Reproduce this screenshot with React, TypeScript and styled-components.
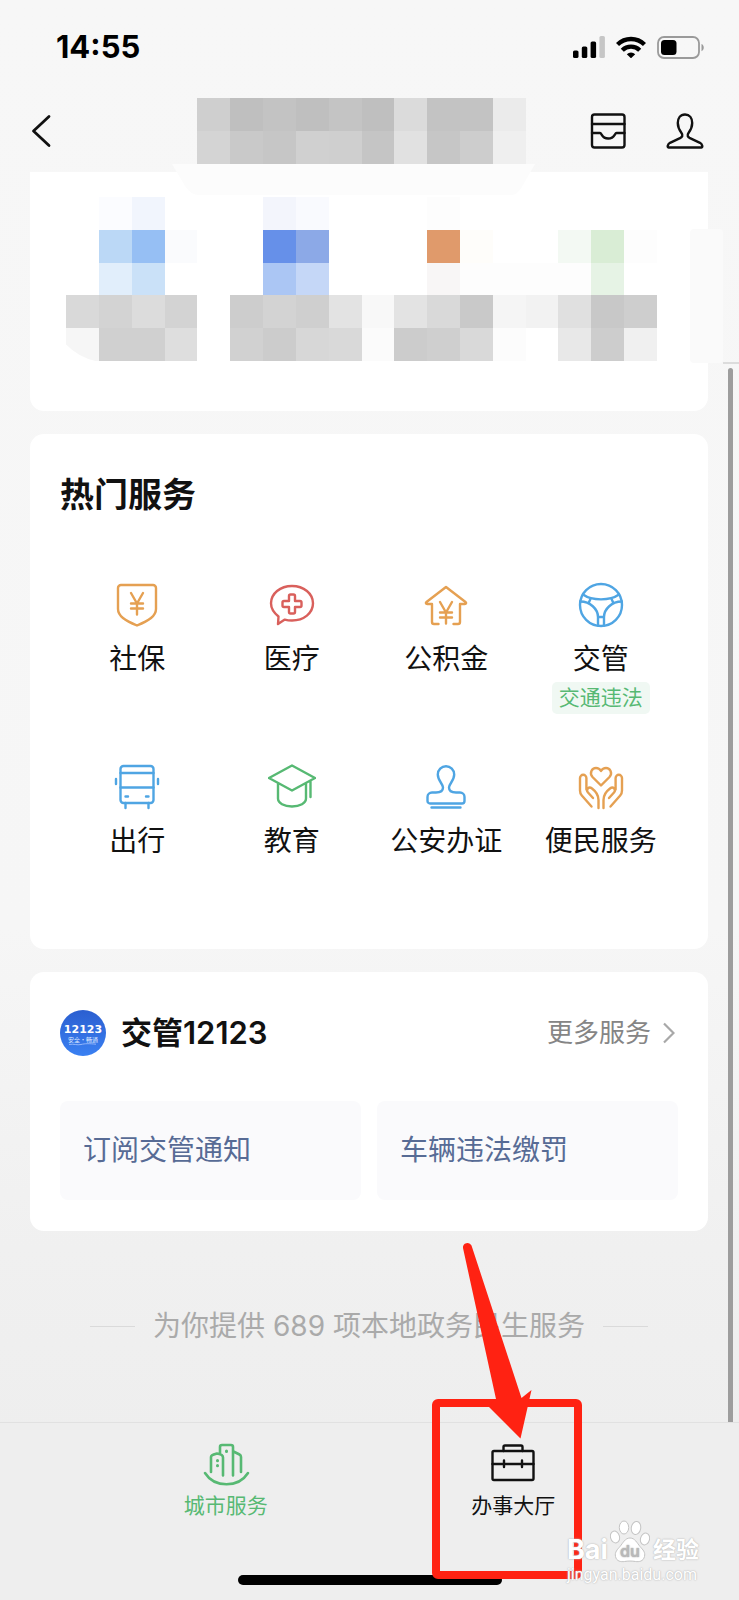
import React from "react";
import styled, { createGlobalStyle } from "styled-components";

const GlobalStyle = createGlobalStyle`
  * { box-sizing: border-box; }
  body {
    margin: 0;
    background: #eeeeee;
    color: #111;
    font-family: Inter, "Noto Sans CJK SC", sans-serif;
  }
  button { font: inherit; color: inherit; background: none; border: 0; padding: 0; cursor: pointer; }
  a { color: inherit; text-decoration: none; }
  h2 { margin: 0; }
  svg { display: block; }
`;

const Page = styled.div`
  position: relative;
  min-height: 100vh;
  display: flex;
  flex-direction: column;
  overflow: hidden;
  background: linear-gradient(#f7f7f7 0%, #f6f6f6 58%, #f0f0f0 78%, #eeeeee 90%);
`;

/* ---------- status bar ---------- */

const StatusBar = styled.div`
  height: 90px;
  padding: 4px 34px 0 56px;
  display: flex;
  align-items: center;
  justify-content: space-between;
`;

const Clock = styled.time`
  font-size: 31px;
  line-height: 32px;
  font-weight: 700;
  color: #000;
`;

const StatusIcons = styled.div`
  display: flex;
  align-items: center;
  gap: 11px;
`;

/* ---------- navigation ---------- */

const Nav = styled.header`
  position: relative;
  z-index: 1;
  height: 82px;
  padding-right: 16px;
  display: grid;
  grid-template-columns: 1fr 329px 1fr;
  align-items: center;
`;

const BackButton = styled.button`
  justify-self: start;
  margin-left: 17px;
`;

const NavActions = styled.div`
  justify-self: end;
  display: flex;
  gap: 29px;
  padding-right: 14px;
`;

const NavTitle = styled.div`
  position: relative;
  height: 66px;
`;

const TitleTab = styled.svg`
  position: absolute;
  top: 66px;
  left: -25px;
`;

/* ---------- content ---------- */

const Main = styled.main`
  position: relative;
  flex: 1;
  padding: 0 31px 0 30px;
  display: flex;
  flex-direction: column;
  gap: 23px;
`;

const Card = styled.section`
  background: #fff;
  border-radius: 14px;
  padding: 0 30px;
`;

const AppsCard = styled(Card)`
  border-radius: 0 0 14px 14px;
  height: 239px;
  padding: 25px 36px 0;
`;

const SideTab = styled.div`
  position: absolute;
  top: 57px;
  right: 16px;
  width: 33px;
  height: 134px;
  border-radius: 4px;
  background: #fafafa;
`;

const ScrollMark = styled.div`
  position: absolute;
  top: 190px;
  right: 0;
  width: 16px;
  height: 2px;
  background: #dcdcdc;
`;

const ScrollThumb = styled.div`
  position: absolute;
  top: 196px;
  right: 6px;
  bottom: 0;
  width: 5px;
  border-radius: 3px 3px 0 0;
  background: #9d9d9d;
`;

const HotCard = styled(Card)`
  padding-top: 37px;
  padding-bottom: 42px;
`;

const CardTitle = styled.h2<{ $size: number }>`
  font-size: ${(p) => p.$size}px;
  line-height: 48px;
  font-weight: 600;
`;

const ServiceGrid = styled.div`
  display: grid;
  grid-template-columns: repeat(4, 1fr);
  margin-top: 62px;
  row-gap: 38px;
`;

const Service = styled.a`
  height: 144px;
  display: flex;
  flex-direction: column;
  align-items: center;
  white-space: nowrap;
`;

const ServiceLabel = styled.span`
  margin-top: 12px;
  font-size: 28px;
  line-height: 36px;
`;

const Badge = styled.span`
  margin-top: 5px;
  padding: 0 7px;
  border-radius: 5px;
  background: #f0f8f3;
  color: #57b973;
  font-size: 21px;
  line-height: 32px;
`;

const TrafficCard = styled(Card)`
  padding-top: 37px;
  padding-bottom: 31px;
`;

const TrafficHead = styled.div`
  display: flex;
  align-items: center;
  gap: 15px;
`;

const MoreLink = styled.a`
  margin-left: auto;
  margin-right: 3px;
  display: flex;
  align-items: center;
  gap: 12px;
  font-size: 26px;
  line-height: 36px;
  color: #858585;
`;

const TileRow = styled.div`
  display: grid;
  grid-template-columns: 1fr 1fr;
  gap: 16px;
  margin-top: 44px;
`;

const Tile = styled.button`
  height: 99px;
  padding: 0 23px 2px;
  border-radius: 8px;
  background: #fafafc;
  color: #576b95;
  font-size: 28px;
  line-height: 40px;
  text-align: left;
`;

const Summary = styled.p`
  margin: 52px 0 74px;
  display: flex;
  align-items: center;
  justify-content: center;
  gap: 18px;
  font-size: 28px;
  line-height: 40px;
  color: #aaa;
  white-space: nowrap;
  &::before, &::after {
    content: "";
    width: 45px;
    height: 1px;
    background: #dadada;
  }
`;

/* ---------- tab bar ---------- */

const TabBar = styled.nav`
  position: relative;
  height: 178px;
  padding: 0 82px;
  border-top: 1px solid #e1e1e1;
  background: #eeeeee;
  display: grid;
  grid-template-columns: 1fr 1fr;
`;

const Tab = styled.a<{ $active?: boolean }>`
  padding-top: 19px;
  display: flex;
  flex-direction: column;
  align-items: center;
  font-size: 21px;
  line-height: 32px;
  color: ${(p) => (p.$active ? "#57b973" : "#111")};
`;

const HomeIndicator = styled.div`
  position: absolute;
  bottom: 15px;
  left: calc(50% - 132px);
  width: 264px;
  height: 10px;
  border-radius: 5px;
  background: #000;
`;

/* Callout drawn over the second tab; shares the tab bar's columns. */
const PointerLayer = styled.div`
  position: absolute;
  left: 0;
  right: 0;
  bottom: 0;
  height: 178px;
  padding: 0 82px;
  display: grid;
  grid-template-columns: 1fr 1fr;
  pointer-events: none;
`;

const PointerCell = styled.div`
  position: relative;
  grid-column: 2;
`;

const Pointer = styled.svg`
  position: absolute;
  top: -183px;
  left: calc(50% - 82px);
`;

const Watermark = styled.div`
  position: absolute;
  right: 40px;
  bottom: 14px;
  width: 132px;
  color: #fff;
  text-shadow: 0 0 2px #bbb, 0 0 1px #bbb;
`;

const WatermarkLogo = styled.div`
  display: flex;
  align-items: flex-end;
  justify-content: space-between;
  font-size: 23px;
  line-height: 28px;
  font-weight: 700;
`;

const WatermarkWord = styled.span<{ $size: number }>`
  font-size: ${(p) => p.$size}px;
`;

const WatermarkUrl = styled.div`
  font-family: Roboto, sans-serif;
  font-size: 16px;
  line-height: 22px;
`;

/* ---------- drawings ---------- */

const ORANGE = "#e5a052";
const RED = "#d9605c";
const BLUE = "#4fa5e3";
const GREEN = "#57b973";

type LineIconProps = { color?: string; width?: number; children: React.ReactNode };

const LineIcon = ({ color = "currentColor", width = 2.4, children }: LineIconProps) => (
  <svg width="48" height="48" viewBox="0 0 48 48" fill="none" stroke={color} strokeWidth={width}
    strokeLinecap="round" strokeLinejoin="round" aria-hidden="true">
    {children}
  </svg>
);

type Cell = string | null;

type MosaicProps = { rows: Cell[][]; width: string; height: number; children?: React.ReactNode };

const Mosaic = ({ rows, width, height, children }: MosaicProps) => (
  <svg width={width} height={height} viewBox={`0 0 ${rows[0].length} ${rows.length}`} preserveAspectRatio="none"
    shapeRendering="crispEdges" aria-hidden="true">
    {rows.map((row, y) =>
      row.map((c, x) => (c ? <rect key={`${x}-${y}`} x={x} y={y} width="1" height="1" fill={`#${c}`} /> : null)),
    )}
    {children}
  </svg>
);

const _ = null;

const titleCells: Cell[][] = [
  ["cfcfcf", "bfbfbf", "c3c3c3", "bfbfbf", "c4c4c4", "bfbfbf", "dbdbdb", "c3c3c3", "c3c3c3", "ebebeb"],
  ["d4d4d4", "c9c9c9", "c6c6c6", "d0d0d0", "cfcfcf", "c5c5c5", "e1e1e1", "c6c6c6", "cdcdcd", "efefef"],
];

const appCells: Cell[][] = [
  [_, "fbfcff", "f1f5fd", _, _, _, "f3f5fc", "f9fafe", _, _, _, "fdfdfd", _, _, _, _, _, _],
  [_, "bbd8f6", "96bff4", "fafbfd", _, _, "6690e9", "8ca9e7", _, _, _, "e09a6b", "fefdfa", _, _, "f3f9f3", "d9edd5", "fdfdfd"],
  [_, "e1eefb", "cae1f8", _, _, _, "abc6f4", "c5d7f7", _, _, _, "f8f6f6", "fdfdfd", "fdfdfd", "fdfdfd", "fdfdfd", "e6f3e5", _],
  ["d9d9d9", "d3d3d3", "dcdcdc", "d3d3d3", _, "cdcdcd", "d3d3d3", "cfcfcf", "e3e3e3", "f8f8f8", "e3e3e3", "d9d9d9", "c9c9c9", "f5f5f5", "f2f2f2", "e0e0e0", "c8c8c8", "cecece"],
  ["f6f6f6", "d0d0d0", "d0d0d0", "dedede", _, "d1d1d1", "cccccc", "d7d7d7", "d9d9d9", "fbfbfb", "cccccc", "cfcfcf", "d9d9d9", "fcfcfc", _, "e8e8e8", "cdcdcd", "f0f0f0"],
];

const Signal = () => (
  <svg width="32" height="22" viewBox="0 0 32 22" aria-hidden="true">
    <rect x="0" y="14.5" width="5.5" height="7.5" rx="1.6" />
    <rect x="8.8" y="10.5" width="5.5" height="11.5" rx="1.6" />
    <rect x="17.6" y="5.5" width="5.5" height="16.5" rx="1.6" />
    <rect x="26.4" y="0" width="5.5" height="22" rx="1.6" fill="#c6c6c6" />
  </svg>
);

const Wifi = () => (
  <svg width="30" height="22" viewBox="0 0 30 22" fill="none" stroke="#000" strokeWidth="4.4" aria-hidden="true">
    <path d="M1.500 8.500a19.400 19.400 0 0 1 27 0" />
    <path d="M6.300 14.200a12.400 12.400 0 0 1 17.400 0" />
    <path d="M10.800 18.200a6.200 6.200 0 0 1 8.400 0L15 22.300Z" fill="#000" stroke="none" />
  </svg>
);

const Battery = () => (
  <svg width="48" height="23" viewBox="0 0 48 23" aria-hidden="true">
    <rect x="1" y="1" width="41" height="21" rx="6" fill="none" stroke="#9a9a9a" strokeWidth="1.8" />
    <rect x="4" y="4" width="15.5" height="15" rx="3.5" />
    <path d="M44.5 8c3 1.2 3 6 0 7.2Z" fill="#9a9a9a" />
  </svg>
);

const yen = (dy: number) => (
  <path d={`M18 ${12 + dy}l6 10.5 6-10.5M24 ${22.5 + dy}v11M18 ${22.5 + dy}h12M18 ${27.5 + dy}h12`} />
);

const services = [
  {
    name: "社保", color: ORANGE,
    art: <><path d="M8 4h32a3 3 0 0 1 3 3V28c0 7-7 11.500-19 16.500C12 39.500 5 35 5 28V7a3 3 0 0 1 3-3Z" />{yen(0)}</>,
  },
  {
    name: "医疗", color: RED,
    art: <>
      <path d="M10.500 35.500C5.500 31.500 3 27 3 22.300 3 12.500 12.200 5 24 5s21 7.500 21 17.300S35.800 39.500 24 39.500c-2.500 0-5-.3-7.200-.9L10 43Z" />
      <path d="M22.500 13.500h3a1.500 1.500 0 0 1 1.500 1.500v5h5a1.500 1.500 0 0 1 1.500 1.500v3a1.500 1.500 0 0 1-1.500 1.500h-5v5a1.500 1.500 0 0 1-1.500 1.500h-3a1.500 1.500 0 0 1-1.500-1.500v-5h-5a1.500 1.500 0 0 1-1.500-1.500v-3a1.500 1.500 0 0 1 1.500-1.500h5v-5a1.500 1.500 0 0 1 1.500-1.500Z" />
    </>,
  },
  {
    name: "公积金", color: ORANGE,
    art: <>
      <path d="M16.500 43H12a2 2 0 0 1-2-2V23H5.200c-1.500 0-1.700-1.200-.7-2L24 6l19.500 15c1 .8.800 2-.7 2H38v18a2 2 0 0 1-2 2h-4.500" />
      {yen(9)}
    </>,
  },
  {
    name: "交管", color: BLUE, badge: "交通违法",
    art: <>
      <circle cx="24" cy="24" r="21" />
      <path d="M6 13.500c9 6.500 27 6.500 36 0M3.300 20.500C13 20.500 21 28 21 36v8.500M44.700 20.500C35 20.500 27 28 27 36v8.500M21 36h6M13.800 17.300l-2.300 5M34.200 17.300l2.300 5" />
    </>,
  },
  {
    name: "出行", color: BLUE,
    art: <>
      <rect x="7.500" y="3" width="33" height="37" rx="3" />
      <path d="M7.500 10h33M7.500 24.500h33M12.500 40v5M35.500 40v5M12.500 33.500h2.500M33 33.500h2.500M3 16v5M45 16v5" />
    </>,
  },
  {
    name: "教育", color: GREEN,
    art: <path d="M24 2.500 47 15 24 27.500 1 15ZM10 20v15.500C10 40 16 43.500 24 43.500s14-3.500 14-8V20M42.500 18v16" />,
  },
  {
    name: "公安办证", color: BLUE,
    art: <path d="M8 40.500a2.500 2.500 0 0 1-2.500-2.500v-4a4.500 4.500 0 0 1 4.500-4.500h4c4.500 0 7-1.500 7-5 0-3.500-5.200-7-5.200-13a8.200 8.200 0 0 1 16.400 0c0 6-5.200 9.500-5.200 13 0 3.500 2.500 5 7 5h4a4.500 4.500 0 0 1 4.500 4.500v4a2.500 2.500 0 0 1-2.500 2.500ZM9.500 44.500h29" />,
  },
  {
    name: "便民服务", color: ORANGE,
    art: <>
      <path d="M24 22.500 15.500 14c-3.500-4 -.5-9 3.500-9 2.300 0 4 1.300 5 3 1-1.700 2.700-3 5-3 4 0 7 5 3.500 9Z" />
      <path d="M14.500 43.500 4.800 32.500C3.300 30.800 3 29.500 3 27.500V15a3.200 3.200 0 0 1 6.400 0v11.500M16 35l-5-5.500c-2.500-3 .8-6.500 4-4C19 28.500 21.500 31.500 21.500 37v8" />
      <path d="M33.500 43.500l9.700-11c1.500-1.700 1.800-3 1.800-5V15a3.200 3.200 0 0 0-6.400 0v11.500M32 35l5-5.500c2.500-3-.8-6.500-4-4C29 28.500 26.500 31.500 26.500 37v8" />
    </>,
  },
];

const TrafficLogo = () => (
  <svg width="46" height="46" viewBox="0 0 46 46" aria-hidden="true">
    <defs>
      <linearGradient id="logoFill" x1="0" y1="0" x2="0" y2="1">
        <stop offset="0" stopColor="#2b5fd0" />
        <stop offset="1" stopColor="#3a80f2" />
      </linearGradient>
    </defs>
    <circle cx="23" cy="23" r="23" fill="url(#logoFill)" />
    <text x="23" y="23" textAnchor="middle" fill="#fff" fontFamily="'DejaVu Sans', sans-serif" fontWeight="700" fontSize="11">12123</text>
    <text x="23" y="32" textAnchor="middle" fill="#dfe9ff" fontFamily="'Noto Sans CJK SC', sans-serif" fontSize="6">安全·畅通</text>
    <path d="M9 34.500c5-1 8 1 12 0s8-1 15-.3" fill="none" stroke="#a9c6ff" strokeWidth=".8" />
  </svg>
);

const Paw = () => (
  <svg width="40" height="44" viewBox="0 0 40 44" fill="#fff" stroke="#c4c4c4" strokeWidth="1" aria-hidden="true">
    <ellipse cx="5" cy="17" rx="4.500" ry="6" transform="rotate(-15 5 17)" />
    <ellipse cx="14" cy="7.500" rx="4.700" ry="6.500" />
    <ellipse cx="26" cy="8" rx="4.700" ry="6.500" transform="rotate(10 26 8)" />
    <ellipse cx="35" cy="19" rx="4.500" ry="6" transform="rotate(15 35 19)" />
    <path d="M20 18c5 0 7 5 10 8.500 3 3.500 5.500 5.500 4.500 10-1.200 5-5.500 5.500-9 5-3.500-.6-7.500-.6-11 0-3.500.5-8 0-9-5-1-4.500 2-7 4.500-10C13 23 15 18 20 18Z" />
    <text x="20" y="37" textAnchor="middle" fill="#b9b9b9" stroke="none" fontFamily="Inter, sans-serif" fontWeight="600" fontSize="16">du</text>
  </svg>
);

export default function App() {
  return (
    <Page>
      <GlobalStyle />
      <StatusBar>
        <Clock>14:55</Clock>
        <StatusIcons>
          <Signal />
          <Wifi />
          <Battery />
        </StatusIcons>
      </StatusBar>

      <Nav>
        <BackButton type="button" aria-label="返回">
          <LineIcon width={2.8}><path d="M32 9.500 16.500 24 32 38.500" /></LineIcon>
        </BackButton>
        <NavTitle>
          <Mosaic rows={titleCells} width="100%" height={66} />
          <TitleTab width="363" height="31" viewBox="0 0 363 31" aria-hidden="true">
            <path d="M0 0h363l-12 21q-5 10-12 10H27q-8 0-14-9Z" fill="#fcfcfc" />
          </TitleTab>
        </NavTitle>
        <NavActions>
          <button type="button" aria-label="卡包">
            <LineIcon width={2.4}>
              <rect x="8" y="7.500" width="32.500" height="33" rx="2.500" />
              <path d="M8 17h32.500M8 26h8c2 0 1.500 5.500 8.200 5.500S30.500 26 32.500 26h8" />
            </LineIcon>
          </button>
          <button type="button" aria-label="我的">
            <LineIcon width={2.4}>
              <path d="M24 7.500c-4.700 0-7.200 3.700-7.200 8.500 0 4.500 1.700 7.300 3.700 10 1.700 2.300.8 4-1.500 5.200L9 35.800c-2.300 1.200-3 4.700-1.500 4.700h33c1.500 0 .8-3.500-1.500-4.700l-10-4.600c-2.300-1.200-3.200-2.900-1.500-5.200 2-2.700 3.700-5.500 3.700-10 0-4.800-2.500-8.500-7.200-8.500Z" />
            </LineIcon>
          </button>
        </NavActions>
      </Nav>

      <Main>
        <AppsCard>
          <Mosaic rows={appCells} width="591" height={164}>
            <path d="M0 4.500V5H.9Q.4 4.900 0 4.500Z" fill="#fff" shapeRendering="auto" />
          </Mosaic>
        </AppsCard>
        <SideTab />
        <ScrollMark />
        <ScrollThumb />

        <HotCard>
          <CardTitle $size={34}>热门服务</CardTitle>
          <ServiceGrid>
            {services.map((s) => (
              <Service key={s.name} href="#">
                <LineIcon color={s.color}>{s.art}</LineIcon>
                <ServiceLabel>{s.name}</ServiceLabel>
                {s.badge && <Badge>{s.badge}</Badge>}
              </Service>
            ))}
          </ServiceGrid>
        </HotCard>

        <TrafficCard>
          <TrafficHead>
            <TrafficLogo />
            <CardTitle $size={31}>交管12123</CardTitle>
            <MoreLink href="#">
              更多服务
              <svg width="12" height="22" viewBox="0 0 12 22" fill="none" stroke="#a8a8a8" strokeWidth="2.200" aria-hidden="true">
                <path d="M1 1.500 10.500 11 1 20.500" />
              </svg>
            </MoreLink>
          </TrafficHead>
          <TileRow>
            <Tile type="button">订阅交管通知</Tile>
            <Tile type="button">车辆违法缴罚</Tile>
          </TileRow>
        </TrafficCard>

        <Summary>为你提供 689 项本地政务民生服务</Summary>
      </Main>

      <TabBar>
        <Tab href="#" $active>
          <LineIcon width={2.6}>
            <path d="M3 31c9.500 15 33.500 15 43 0M9 30V15c0-1.500.5-2 6-3.500 4 .5 6 2 6 4v18M18 11V5c0-1.500.5-2 2-2h9c1.500 0 2 .5 2 2v28.500M31.500 9.500l6 3c1 .5 1.500 1 1.500 2.500v15" />
            <path d="M24.500 9v.5M15.500 18.500v.2M15.500 23.500v.2" strokeWidth="3" />
          </LineIcon>
          城市服务
        </Tab>
        <Tab href="#">
          <LineIcon>
            <rect x="3.500" y="9" width="41" height="29" rx="1.500" />
            <path d="M14.500 9V5A1.500 1.500 0 0 1 16 3.500h16A1.500 1.500 0 0 1 33.500 5v4M3.500 22h41M15 18.500v6.500M33 18.500v6.500" />
          </LineIcon>
          办事大厅
        </Tab>
        <HomeIndicator />
      </TabBar>

      <PointerLayer>
        <PointerCell>
          <Pointer width="152" height="342" viewBox="0 0 152 342" aria-hidden="true">
            <rect x="5" y="164" width="142" height="172" rx="2" fill="none" stroke="#ff2212" strokeWidth="8" />
            <path d="M32 9a4.500 4.500 0 0 1 8.500-2.500L90.500 159l10-8L89.500 199.500 57 167l8-7Z" fill="#ff2212" />
          </Pointer>
        </PointerCell>
      </PointerLayer>

      <Watermark>
        <WatermarkLogo>
          <WatermarkWord $size={27}>Bai</WatermarkWord>
          <Paw />
          <WatermarkWord $size={23}>经验</WatermarkWord>
        </WatermarkLogo>
        <WatermarkUrl>jingyan.baidu.com</WatermarkUrl>
      </Watermark>
    </Page>
  );
}
